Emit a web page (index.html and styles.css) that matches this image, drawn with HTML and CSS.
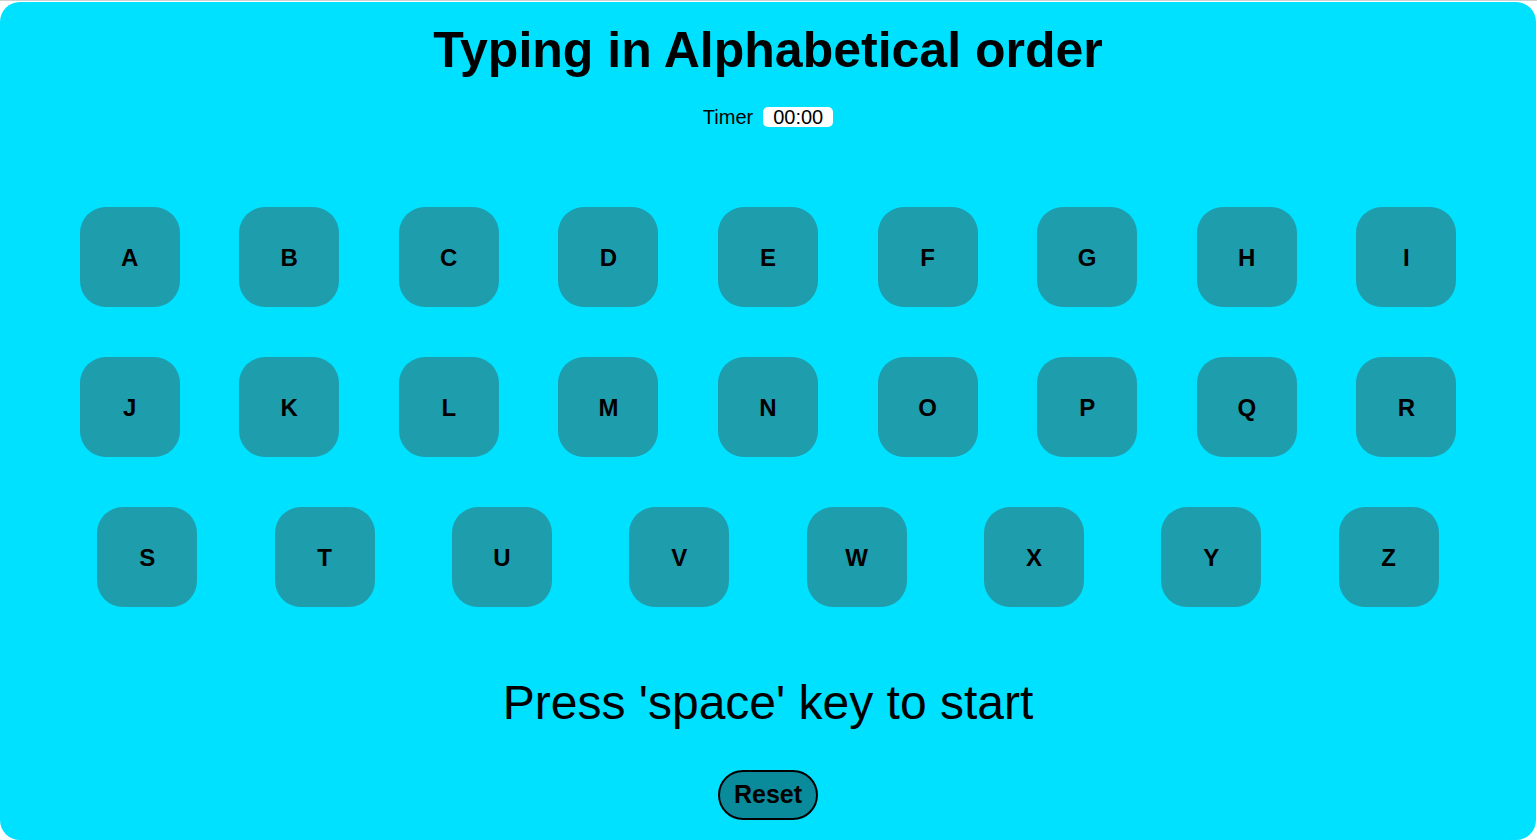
FILE: index.html
```html
<!DOCTYPE html>
<html lang="en">
<head>
<meta charset="utf-8">
<title>Typing in Alphabetical order</title>
<link rel="stylesheet" href="styles.css">
</head>
<body>
<main class="app">
  <h1 class="title">Typing in Alphabetical order</h1>
  <div class="timer">
    <span class="timer-label">Timer</span>
    <span class="timer-value">00:00</span>
  </div>
  <div class="keyboard">
    <div class="row">
      <div class="key">A</div><div class="key">B</div><div class="key">C</div><div class="key">D</div><div class="key">E</div><div class="key">F</div><div class="key">G</div><div class="key">H</div><div class="key">I</div>
    </div>
    <div class="row">
      <div class="key">J</div><div class="key">K</div><div class="key">L</div><div class="key">M</div><div class="key">N</div><div class="key">O</div><div class="key">P</div><div class="key">Q</div><div class="key">R</div>
    </div>
    <div class="row">
      <div class="key">S</div><div class="key">T</div><div class="key">U</div><div class="key">V</div><div class="key">W</div><div class="key">X</div><div class="key">Y</div><div class="key">Z</div>
    </div>
  </div>
  <p class="message">Press 'space' key to start</p>
  <div class="actions">
    <button class="reset" type="button">Reset</button>
  </div>
</main>
</body>
</html>
```
FILE: styles.css
```css
* {
  box-sizing: border-box;
}

html, body {
  margin: 0;
  padding: 0;
}

body {
  background: #ffffff;
  border-top: 1px solid #d0d0d0;
  font-family: "Liberation Sans", Arial, sans-serif;
  color: #000;
  overflow: hidden;
}

.app {
  margin-top: 1px;
  width: 1536px;
  height: 838px;
  background: #00e1ff;
  border-radius: 20px;
  display: flex;
  flex-direction: column;
  align-items: stretch;
}

.title {
  margin: 20px 0 0;
  font-size: 50px;
  font-weight: bold;
  text-align: center;
  line-height: 57px;
}

.timer {
  margin-top: 28px;
  display: flex;
  justify-content: center;
  align-items: center;
  gap: 10px;
  font-size: 20px;
  height: 20px;
}

.timer-label {
  line-height: 20px;
}

.timer-value {
  background: #ffffff;
  border-radius: 5px;
  width: 70px;
  height: 20px;
  line-height: 20px;
  text-align: center;
}

.keyboard {
  margin-top: 80px;
  display: flex;
  flex-direction: column;
  gap: 50px;
  padding: 0 20px;
}

.row {
  display: flex;
  justify-content: space-evenly;
}

.key {
  width: 100px;
  height: 100px;
  border-radius: 26px;
  background: #1e9dad;
  display: flex;
  align-items: center;
  justify-content: center;
  padding-top: 2px;
  font-size: 24px;
  font-weight: bold;
}

.message {
  margin: 68px 0 0;
  text-align: center;
  font-size: 48px;
  line-height: 55px;
}

.actions {
  margin-top: 40px;
  display: flex;
  justify-content: center;
}

.reset {
  width: 100px;
  height: 50px;
  border: 2px solid #000;
  border-radius: 25px;
  background: #0a8b9b;
  font-family: "Liberation Sans", Arial, sans-serif;
  font-size: 25px;
  font-weight: bold;
  color: #000;
  padding: 0 0 2px;
  cursor: pointer;
}
```
